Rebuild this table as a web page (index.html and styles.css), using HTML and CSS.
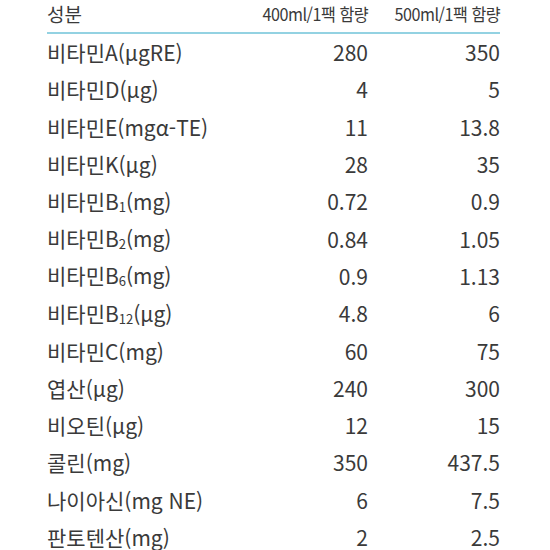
FILE: index.html
```html
<!DOCTYPE html>
<html lang="ko">
<head>
<meta charset="utf-8">
<link rel="stylesheet" href="styles.css">
</head>
<body>
<div class="tbl">
  <div class="row head">
    <div class="name">성분</div>
    <div class="num"><span class="cond">400ml/1팩 함량</span></div>
    <div class="num"><span class="cond">500ml/1팩 함량</span></div>
  </div>
  <div class="row"><div class="name">비타민A(μgRE)</div><div class="num">280</div><div class="num">350</div></div>
  <div class="row"><div class="name">비타민D(μg)</div><div class="num">4</div><div class="num">5</div></div>
  <div class="row"><div class="name">비타민E(mgα-TE)</div><div class="num">11</div><div class="num">13.8</div></div>
  <div class="row"><div class="name">비타민K(μg)</div><div class="num">28</div><div class="num">35</div></div>
  <div class="row"><div class="name">비타민B<span class="sub">1</span>(mg)</div><div class="num">0.72</div><div class="num">0.9</div></div>
  <div class="row"><div class="name">비타민B<span class="sub">2</span>(mg)</div><div class="num">0.84</div><div class="num">1.05</div></div>
  <div class="row"><div class="name">비타민B<span class="sub">6</span>(mg)</div><div class="num">0.9</div><div class="num">1.13</div></div>
  <div class="row"><div class="name">비타민B<span class="sub">12</span>(μg)</div><div class="num">4.8</div><div class="num">6</div></div>
  <div class="row"><div class="name">비타민C(mg)</div><div class="num">60</div><div class="num">75</div></div>
  <div class="row"><div class="name">엽산(μg)</div><div class="num">240</div><div class="num">300</div></div>
  <div class="row"><div class="name">비오틴(μg)</div><div class="num">12</div><div class="num">15</div></div>
  <div class="row"><div class="name">콜린(mg)</div><div class="num">350</div><div class="num">437.5</div></div>
  <div class="row"><div class="name">나이아신(mg NE)</div><div class="num">6</div><div class="num">7.5</div></div>
  <div class="row"><div class="name">판토텐산(mg)</div><div class="num">2</div><div class="num">2.5</div></div>
</div>
</body>
</html>
```
FILE: styles.css
```css
html, body {
  margin: 0;
  padding: 0;
  background: #ffffff;
  overflow: hidden;
}
body {
  font-family: "Noto Sans CJK KR", "Noto Sans", sans-serif;
  color: #3a3a3a;
}
.tbl {
  margin-left: 47px;
  width: 453px;
}
.row {
  display: grid;
  grid-template-columns: 1fr 120px 132px;
  align-items: center;
  height: 37.3px;
  font-size: 21px;
  line-height: 1;
}
.row.head {
  align-items: start;
  padding-top: 4px;
  box-sizing: border-box;
  border-bottom: 2px solid #93d2e2;
  font-size: 19px;
  height: 34px;
}
.head .num {
  font-size: 17px;
  padding-top: 1px;
  white-space: nowrap;
}
.cond {
  display: inline-block;
  letter-spacing: -0.5px;
  transform: scaleX(0.95);
  transform-origin: right center;
}
.num {
  text-align: right;
}
.sub {
  font-size: 13px;
  vertical-align: -2px;
}
```
